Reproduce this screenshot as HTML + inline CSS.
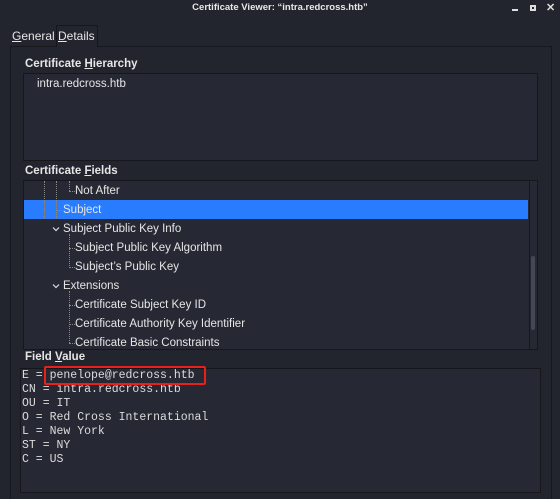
<!DOCTYPE html>
<html><head><meta charset="utf-8"><style>
*{margin:0;padding:0;box-sizing:border-box}
html,body{width:560px;height:499px;overflow:hidden}
body{background:#23252e;color:#e6e6e6;font-family:"Liberation Sans",sans-serif;font-size:11.5px;position:relative}
.a{position:absolute}
.title{left:0;top:2px;width:560px;text-align:center;font-size:9.5px;font-weight:bold;color:#e8e8e8}
.pane{left:10px;top:46px;width:542px;height:460px;border:1px solid #16181e}
.box{background:#262833;border:1px solid #15171c}
.lbl{font-weight:bold;font-size:11.5px}
.row{position:absolute;left:0;height:19px;line-height:19px;white-space:nowrap}
.mono{font-family:"Liberation Mono",monospace;font-size:11.5px;line-height:14px;white-space:pre;color:#dcdcdc}
u{text-decoration:underline}
.dot{position:absolute;border-left:1px dotted #888}
.hd{position:absolute;border-top:1px dotted #888;height:0}
.chev{position:absolute;width:8px;height:6px}
</style></head><body>
<div class="a title">Certificate Viewer: “intra.redcross.htb”</div>
<div class="a" style="left:512px;top:9px;width:6px;height:2px;background:#ddd"></div>
<div class="a" style="left:530px;top:5px;width:6px;height:6px;border:2px solid #ddd"></div>
<div class="a" style="left:546px;top:1px;color:#ddd;font-size:11px;font-weight:bold">✕</div>
<div class="a pane"></div>
<div class="a" style="left:12px;top:29px;font-size:12px"><u>G</u>eneral</div>
<div class="a" style="left:56px;top:25px;width:42px;height:22px;border:1px solid #15171c;border-bottom:none;background:#23252e"></div>
<div class="a" style="left:58px;top:29px;font-size:12px"><u>D</u>etails</div>
<div class="a lbl" style="left:25px;top:58px">Certificate <u>H</u>ierarchy</div>
<div class="a box" style="left:23px;top:73px;width:515px;height:88px"></div>
<div class="a" style="left:37px;top:78px">intra.redcross.htb</div>
<div class="a lbl" style="left:25px;top:165px">Certificate <u>F</u>ields</div>
<div class="a box" style="left:23px;top:180px;width:515px;height:170px;overflow:hidden">
 <div class="a" style="left:505px;top:0;width:1px;height:170px;background:#15171c"></div>
 <div class="a" style="left:507px;top:75px;width:4px;height:74px;background:#454852;border-radius:2px"></div>
 <div class="row" style="top:19px;width:504px;height:19px;background:#2a7cff"></div>
 <div class="dot" style="left:20px;top:0;height:38px"></div>
 <div class="dot" style="left:32px;top:0;height:38px"></div>
 <div class="dot" style="left:45px;top:0;height:10px"></div>
 <div class="hd" style="left:45px;top:10px;width:6px"></div>
 <div class="hd" style="left:33px;top:29px;width:5px"></div>
 <div class="row" style="top:1px;left:51px">Not After</div>
 <div class="row" style="top:20px;left:39px">Subject</div>
 <svg class="chev" style="left:28px;top:45px" viewBox="0 0 8 6"><path d="M1 1.5L4 4.5L7 1.5" stroke="#ddd" stroke-width="1.2" fill="none"/></svg>
 <div class="row" style="top:39px;left:39px">Subject Public Key Info</div>
 <div class="dot" style="left:45px;top:53px;height:34px"></div>
 <div class="hd" style="left:45px;top:67px;width:6px"></div>
 <div class="hd" style="left:45px;top:86px;width:6px"></div>
 <div class="row" style="top:58px;left:51px">Subject Public Key Algorithm</div>
 <div class="row" style="top:77px;left:51px">Subject’s Public Key</div>
 <svg class="chev" style="left:28px;top:102px" viewBox="0 0 8 6"><path d="M1 1.5L4 4.5L7 1.5" stroke="#ddd" stroke-width="1.2" fill="none"/></svg>
 <div class="row" style="top:96px;left:39px">Extensions</div>
 <div class="dot" style="left:45px;top:110px;height:52px"></div>
 <div class="hd" style="left:45px;top:124px;width:6px"></div>
 <div class="hd" style="left:45px;top:143px;width:6px"></div>
 <div class="hd" style="left:45px;top:162px;width:6px"></div>
 <div class="row" style="top:115px;left:51px">Certificate Subject Key ID</div>
 <div class="row" style="top:134px;left:51px">Certificate Authority Key Identifier</div>
 <div class="row" style="top:153px;left:51px">Certificate Basic Constraints</div>
</div>
<div class="a lbl" style="left:25px;top:351px">Field <u>V</u>alue</div>
<div class="a box" style="left:20px;top:368px;width:521px;height:125px"></div>
<div class="a mono" style="left:22px;top:369px">E = penelope@redcross.htb
CN = intra.redcross.htb
OU = IT
O = Red Cross International
L = New York
ST = NY
C = US</div>
<div class="a" style="left:44px;top:366px;width:162px;height:19px;border:2px solid #e8201c;border-radius:2px"></div>
</body></html>
